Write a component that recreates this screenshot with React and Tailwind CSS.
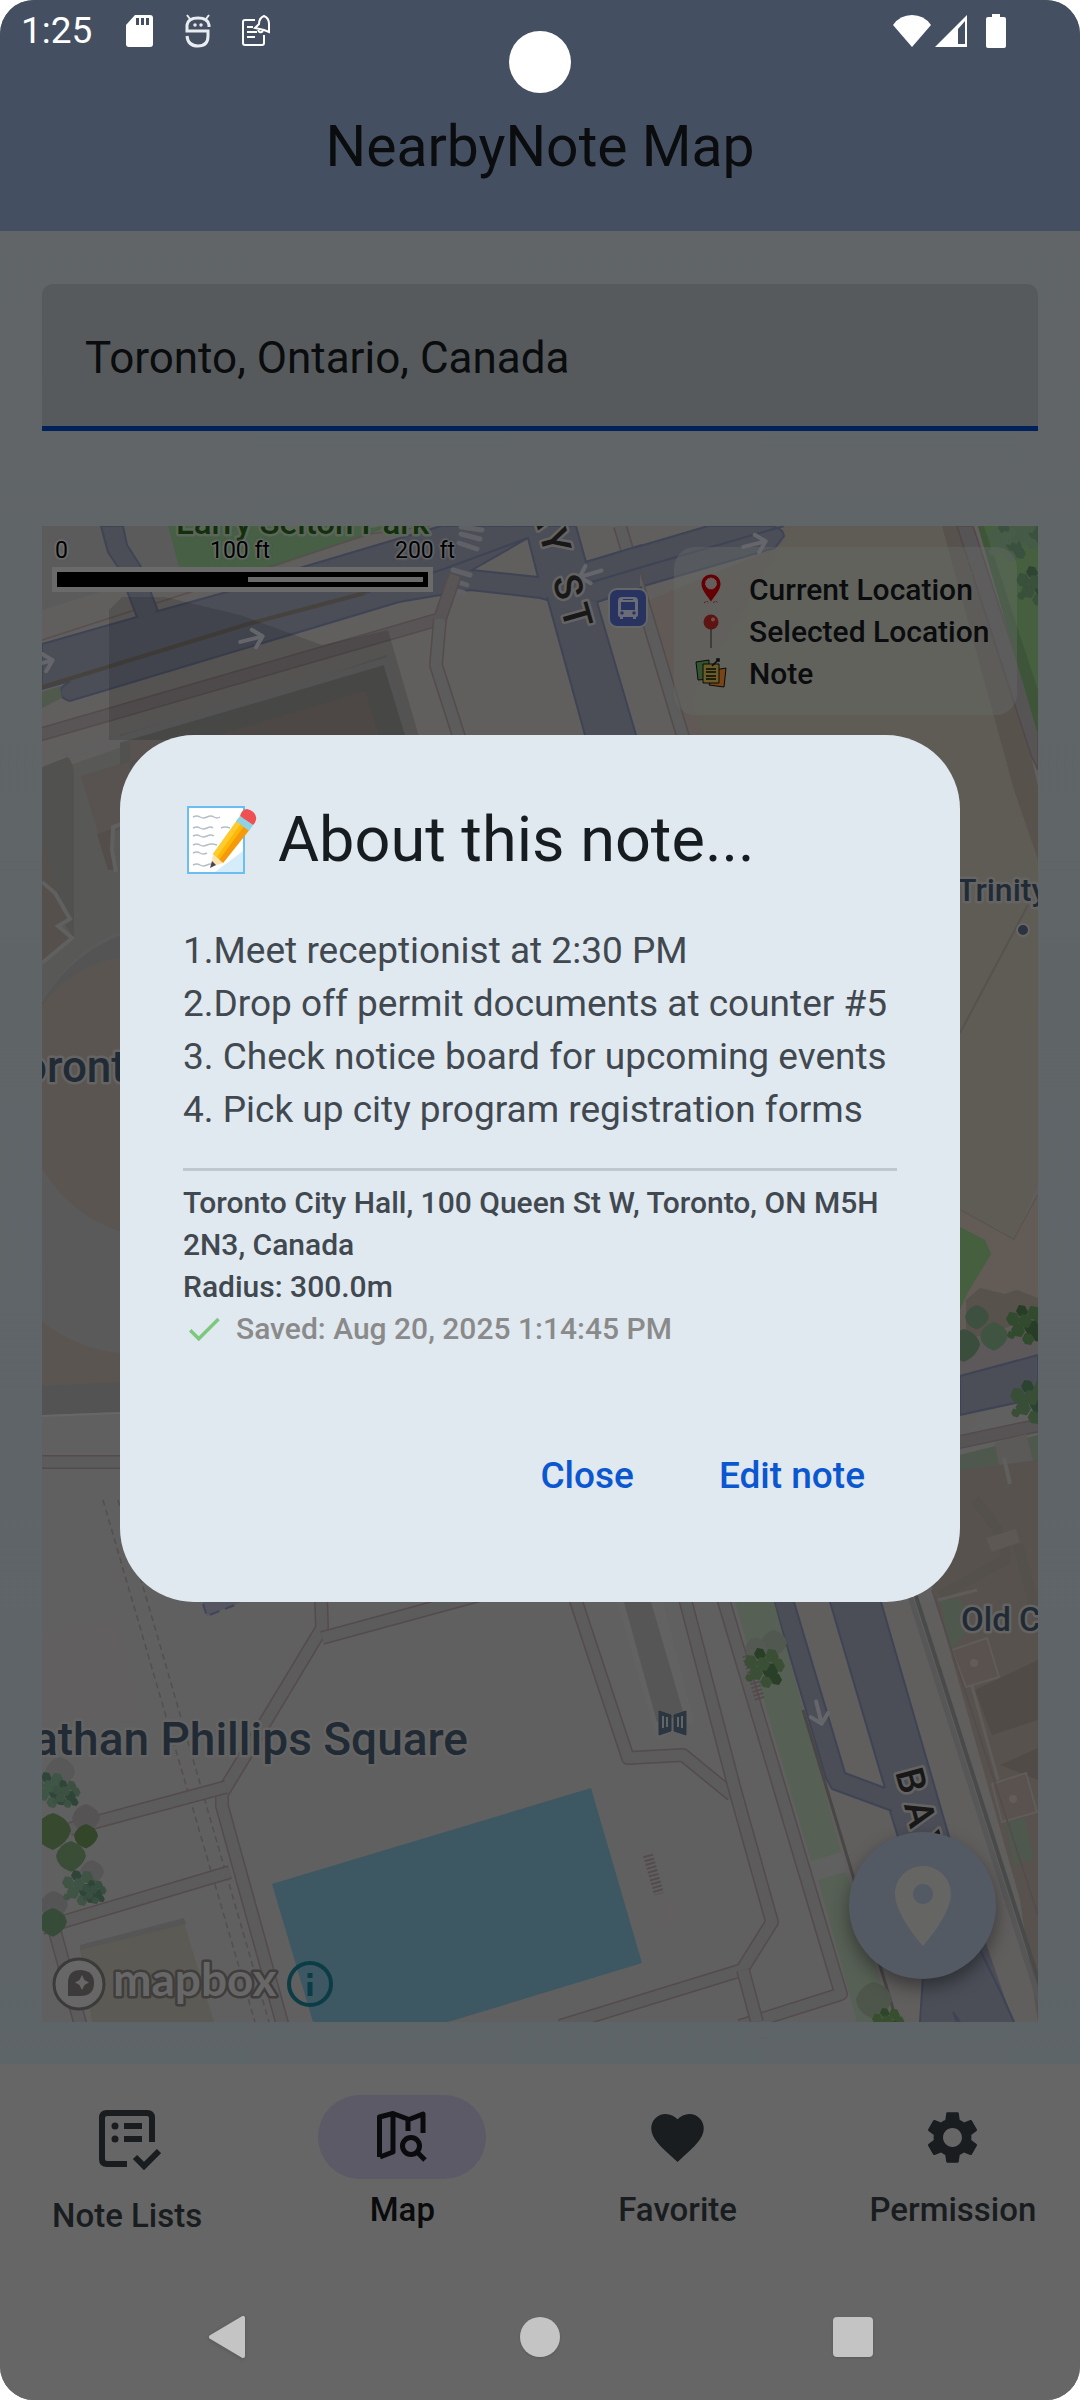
import React from "react";

const ROAD = "#4b4e57";
const ROAD_EDGE = "#3f4455";
const WALK_EDGE = "#544b4c";

function Walk({ d, fill = "#5d5c5c" }) {
  return (
    <g fill="none" strokeLinejoin="round">
      <path d={d} stroke={WALK_EDGE} strokeWidth="14" />
      <path d={d} stroke={fill} strokeWidth="11" />
    </g>
  );
}

function Bush({ x, y, s = 1, tone = "#30472f", tone2 = "#3d5a3c" }) {
  const leaves = [
    [-13, -6, 7], [-4, -14, 6], [8, -12, 7], [14, -3, 7], [6, 3, 8],
    [-8, 5, 7], [-1, -4, 7], [12, 11, 6], [2, 14, 6], [-15, 10, 4],
  ];
  return (
    <g transform={`translate(${x} ${y}) scale(${s})`}>
      {leaves.map(([cx, cy, r], i) => (
        <polygon
          key={i}
          fill={i % 3 === 1 ? tone : tone2}
          points={`${cx - r},${cy} ${cx - r / 2},${cy - r} ${cx + r / 2},${cy - r + 1} ${cx + r},${cy + 1} ${cx + r / 2},${cy + r} ${cx - r / 2},${cy + r - 1}`}
        />
      ))}
    </g>
  );
}

function Leaf({ x, y, r, fill }) {
  return (
    <path
      fill={fill}
      d={`M${x - r} ${y} q${r * 0.2} ${-r * 0.8} ${r} ${-r} q${r * 0.9} ${r * 0.3} ${r} ${r} q${-r * 0.2} ${r * 0.7} ${-r} ${r * 1.05} q${-r * 0.9} ${-r * 0.3} ${-r} ${-r * 1.05}z`}
    />
  );
}

function Arrow({ x, y, a }) {
  return (
    <path
      transform={`translate(${x} ${y}) rotate(${a})`}
      d="M-12 0H10M2 -9L11 0L2 9"
      fill="none"
      stroke="#65666b"
      strokeWidth="4"
      strokeLinecap="round"
      strokeLinejoin="round"
    />
  );
}

function MapLabel({ children, halo = "#656463", fill = "#212b36", ...rest }) {
  return (
    <text fill={fill} stroke={halo} strokeWidth="5" strokeLinejoin="round" paintOrder="stroke" fontWeight="500" {...rest}>
      {children}
    </text>
  );
}

function CityMap() {
  return (
    <svg viewBox="42 526 996 1496" preserveAspectRatio="xMidYMid slice" className="absolute inset-0 h-full w-full font-['Roboto',sans-serif]" aria-label="Map of Toronto City Hall">
      <rect x="42" y="526" width="996" height="1496" fill="#606060" />
      <path d="M42 526H1038V1300L880 1602H1038V2022H890L770 1602L640 900L600 780H42z" fill="#615e5e" />

      {/* city blocks and the park north of Queen Street */}
      <path d="M42 526H168L180 567L42 610z" fill="#5c5b5b" />
      <path d="M168 526H390L370 534L265 570H180z" fill="#465f45" />
      <path d="M42 640L370 534L430 526" fill="none" stroke="#5a4f4f" strokeWidth="1.5" />

      {/* large hall east of Bay Street */}
      <path d="M790 526H942L1014 735L1038 812V1185L1014 1240L960 1210H740L690 700z" fill="#5f5c56" />
      <path d="M942 526H957L1031 755L1038 787V860L1014 790z" fill="#58524d" />
      <path d="M692 700L703 735H690L650 600L775 548L784 526H792z" fill="#605955" />
      <path d="M957 526H973L1038 725V770L1031 755z" fill="#575456" stroke="#514849" strokeWidth="1.5" />
      <path d="M953 566L970 560M956 577L974 572" stroke="#5b5353" strokeWidth="1.5" />
      <path d="M978 526H1038V735z" fill="#46603f" />
      <path d="M978 526H984L1038 690V735z" fill="#3e5539" />
      <Bush x={1008} y={542} tone="#3b513f" tone2="#475c49" />
      <Bush x={1030} y={530} tone="#3b513f" tone2="#465b47" />
      <Bush x={1036} y={586} tone="#2e4534" tone2="#39513b" />
      <path d="M1028 905L960 1033M960 1210L1014 1240L1038 1195" fill="none" stroke="#56534e" strokeWidth="2" />
      <path d="M960 1210L1014 1240L1038 1195V1350L960 1380z" fill="#635b56" />
      <path d="M960 1345L1038 1320V1358L960 1377z" fill="#5d595a" />
      <path d="M966 1300l14 -12l25 6l12 -4l21 8v20l-72 22z" fill="#57524c" />
      <path d="M960 1227L985 1240L991 1254L968 1292L960 1310z" fill="#465f3f" />
      <Leaf x={977} y={1317} r={12} fill="#3e5140" />
      <Leaf x={964} y={1345} r={16} fill="#3b4e3e" />
      <Leaf x={994} y={1336} r={14} fill="#405442" />
      <Bush x={1026} y={1325} tone="#273d25" tone2="#324a2e" />
      <path d="M960 1376L1038 1355V1398L960 1415z" fill={ROAD} stroke={ROAD_EDGE} strokeWidth="2" />
      <Walk d="M955 1443L1045 1424" fill="#575455" />
      <path d="M960 1455L1038 1435V1462L960 1472z" fill="#4f584c" />
      <path d="M995 1443L1026 1434L1034 1464L1000 1472z" fill="#5c5a59" />
      <Bush x={1032} y={1402} s={1.1} tone="#2a4431" tone2="#384e36" />

      {/* Old City Hall */}
      <path d="M930 1580L960 1470L1038 1460V2022L1020 1900z" fill="#57524e" />
      <path d="M1004 1458L1010 1484" stroke="#5f5f5e" strokeWidth="4" />
      <path d="M975 1500Q1010 1540 1005 1560L940 1596M1018 1545L1038 1620" fill="none" stroke="#524d49" strokeWidth="10" opacity="0.5" />
      <path d="M975 1690L1038 1660V1720L992 1735zM1000 1765L1038 1748V1780z" fill="#504b47" />
      <path d="M986 1538L1016 1529L1020 1542L992 1552z" fill="#5d5854" />
      <path d="M940 1600L962 1599L968 1630L951 1650z" fill="#4f584c" />
      <g fill="#59524e" stroke="#5f5c5a" strokeWidth="2">
        <path d="M952 1650L987 1638L999 1677L966 1687z" />
        <path d="M992 1784L1026 1773L1037 1812L1002 1822z" />
      </g>
      <circle cx="974" cy="1663" r="4" fill="#635d59" />
      <circle cx="1013" cy="1799" r="4" fill="#635d59" />
      <path d="M972 1686L998 1780M938 1600L977 1590" stroke="#5f5c5a" strokeWidth="3" fill="none" />
      <path d="M1005 1823L1024 1818L1034 1858L1014 1866z" fill="#4f584c" />

      {/* Queen Street */}
      <g fill={ROAD} stroke={ROAD_EDGE} strokeWidth="2">
        <path d="M101 526H123L127 545L141 567L158 611L138 620L118 567L108 552z" />
        <path d="M42 644L158 611L234 590L303 567L441 526H576L586 562L708 526H760Q782 524 784 536L775 548L640 587L597 602L547 600L540 598L470 590L399 602L70 701Q58 698 61 688L70 681L42 689z" />
      </g>
      <path d="M104 527H122L126 545L140 567L156 613L139 618L119 567L109 552z" fill={ROAD} />
      <path d="M42 687L248 624L365 593" fill="none" stroke="#46433f" strokeWidth="4" />
      <path d="M365 593L441 570L528 538M590 582L784 526" fill="none" stroke={ROAD_EDGE} strokeWidth="2" />
      <path d="M528 538L538 577L472 570z" fill="#615e5e" stroke={ROAD_EDGE} strokeWidth="2" />
      <path d="M42 692L60 686L62 698L42 708z" fill="#4f5a4c" />
      <g stroke="#606166" strokeWidth="5" strokeLinecap="round">
        <path d="M461 527L482 530M461 534L480 539M459 543L477 549M453 570L470 575M449 579L467 585M446 588L464 593" />
      </g>

      {/* footpaths below Queen Street */}
      <Walk d="M35 736L440 619L455 575" fill="#595556" />
      <Walk d="M440 619L436 665L460 740" />
      <path d="M620 526L690 760" fill="none" stroke={WALK_EDGE} strokeWidth="14" />
      <path d="M620 526L690 760" fill="none" stroke="#5b5c5b" strokeWidth="11" />
      <path d="M586 562L640 547V586L597 602z" fill={ROAD} />
      <path d="M586 562L642 545M597 602L642 587M592 582L642 567" stroke={ROAD_EDGE} strokeWidth="2" />

      {/* buildings in the north-west block */}
      <path d="M42 775L386 655L412 740V1000H42z" fill="#585857" />
      <path d="M120 735L386 663L410 740V790H120z" fill="#51514f" />
      <path d="M66 755L386 661L410 740" fill="none" stroke="#5e5f5e" strokeWidth="7" />
      <path d="M42 767L68 757Q74 764 74 775V938L42 890z" fill="#515150" />
      <path d="M81 776L365 691L380 740H130V828L98 833z" fill="#585350" />
      <path d="M97 834L112 829L116 870H108z" fill="#544e4b" />
      <path d="M42 840L60 895L42 882z" fill="#54504c" />
      <path d="M42 882L55 893L70 919L58 926L72 938L42 963z" fill="#56504c" />
      <path d="M42 882L55 893L70 919L58 926L72 938L42 963" fill="none" stroke="#606060" strokeWidth="4" />
      <path d="M124 823L113 827L112 850L116 872" fill="none" stroke="#606060" strokeWidth="4" />
      <path d="M109 610L122 597L165 597L240 615L322 645L388 630L420 740H109z" fill="#000" opacity="0.12" />
      <path d="M42 1002Q75 945 125 930V1410L42 1415z" fill="#5a5a5a" />
      <path d="M42 1002Q75 950 125 934V960Q75 965 42 1010z" fill="#545454" />
      <path d="M42 1005Q75 963 120 958V1231Q70 1215 42 1168z" fill="#5b5551" />
      <path d="M42 1322Q80 1350 120 1353V1382L42 1386z" fill="#5b5551" />
      <path d="M42 1386L120 1382V1412L42 1415z" fill="#535353" />
      <path d="M42 1416L120 1413" stroke="#676767" strokeWidth="2" />
      <Walk d="M35 1462H125" />

      {/* Bay Street */}
      <path d="M545 590L597 602L636 735L881 1602L949 1835L1013 2022H920L924 1975L898 1837L885 1788L830 1602L585 735z" fill={ROAD} />
      <path d="M547 597L585 735L830 1602L885 1788M890 1811L898 1837L924 1960L920 2022M597 602L636 735L881 1602L950 1840L981 1952L1002 1995L1014 2022" fill="none" stroke={ROAD_EDGE} strokeWidth="2" />
      <path d="M774 1602H794L845 1773L885 1788L892 1811L832 1789L826 1778z" fill={ROAD} />
      <path d="M774 1602L826 1778L832 1789L892 1811M794 1602L845 1773L885 1788" fill="none" stroke={ROAD_EDGE} strokeWidth="2" />
      <path d="M957 2022L953 2012L960 2022" fill="none" stroke={ROAD_EDGE} strokeWidth="2" />

      {/* planted strip */}
      <path d="M735 1602H774L841 1852L811 1861z" fill="#576055" />
      <path d="M818 1880L846 1872L893 2022H857z" fill="#576055" />
      <path d="M803 1710L897 2022" stroke="#494746" strokeWidth="3" />
      <path d="M914 1590L1040 1985" stroke="#494a4a" strokeWidth="4" />
      <path d="M908 1590L1040 2003" stroke="#575757" strokeWidth="5" />
      <path d="M932 1590L1038 1915" stroke={WALK_EDGE} strokeWidth="1.5" />
      <Arrow x={819} y={1713} a={76} />

      {/* Nathan Phillips Square */}
      <path d="M42 1634L118 1616L142 1722L42 1724z" fill="#625f60" />
      <path d="M203 1602H241L207 1616z" fill="#565661" />
      <path d="M203 1604L207 1616L240 1603" fill="none" stroke="#41445a" strokeWidth="2" strokeDasharray="10 6" />
      <g stroke="#544e4e" strokeWidth="1.5" strokeDasharray="6 4" fill="none">
        <path d="M103 1500L255 2022M118 1500L269 2022" />
      </g>
      <Walk d="M321 1595L322 1628L222 1794L222 1806L284 2030" />
      <Walk d="M322 1638L480 1595" />
      <Walk d="M226 1787L70 1829" />
      <Walk d="M230 1872L42 1928" />
      <Walk d="M55 1932L82 2030" />
      <Walk d="M574 1595L628 1758L683 1755L732 1795" />
      <Walk d="M684 1595L735 1790L772 1922L742 1970L560 2026" />
      <Walk d="M722 1595L841 1994L740 2026" />
      <Walk d="M743 1970L757 2022" />
      <path d="M617 1602H663L694 1722L657 1740z" fill="#626262" />
      <path d="M624 1602H651L684 1715L657 1722z" fill="#565656" />
      <path d="M747 1655L760 1700" stroke={WALK_EDGE} strokeWidth="10" strokeDasharray="2 2" />
      <path d="M648 1855L659 1894" stroke={WALK_EDGE} strokeWidth="10" strokeDasharray="2 2" />
      <path d="M658 1902L680 1900L685 1922L662 1928z" fill="#625f60" />
      <path d="M272 1884L591 1788L642 1963L448 2022H313z" fill="#3d5763" />
      <path d="M80 1950L184 1922L214 2022H92z" fill="#5c5a54" />
      <path d="M80 1950V1945L184 1918L186 1924z" fill="#565656" />

      {/* trees */}
      <g>
        <Leaf x={86} y={1818} r={14} fill="#565354" />
        <Leaf x={60} y={1772} r={15} fill="#595859" />
        <Leaf x={92} y={1872} r={12} fill="#565657" />
        <Leaf x={54} y={1905} r={14} fill="#555555" />
      </g>
      <Bush x={50} y={1790} s={0.9} tone="#30463a" tone2="#3f5545" />
      <Bush x={66} y={1794} s={0.7} tone="#2f4538" tone2="#3d5143" />
      <Leaf x={53} y={1831} r={18} fill="#37492f" />
      <Leaf x={86} y={1836} r={12} fill="#33462a" />
      <Leaf x={71} y={1856} r={15} fill="#394d37" />
      <Bush x={80} y={1888} s={0.9} tone="#2f4538" tone2="#405445" />
      <Bush x={94} y={1892} s={0.6} tone="#2f4538" tone2="#384e40" />
      <Leaf x={53} y={1922} r={14} fill="#364c39" />
      <Leaf x={774} y={1643} r={13} fill="#50584f" />
      <Leaf x={756} y={1648} r={11} fill="#545a53" />
      <Bush x={764} y={1668} tone="#2a3f27" tone2="#3a4f35" />
      <Leaf x={874} y={2000} r={18} fill="#4e564c" />
      <Bush x={888} y={2024} s={0.8} tone="#2f452a" tone2="#374f2f" />

      <Arrow x={252} y={639} a={-14} />
      <Arrow x={42} y={663} a={-14} />
      <Arrow x={755} y={544} a={-14} />
      <Arrow x={590} y={574} a={163} />

      {/* points of interest */}
      <g transform="translate(610 590)">
        <rect x="-2" y="-2" width="40" height="40" rx="9" fill="#656668" />
        <rect width="36" height="36" rx="7" fill="#29335f" />
        <path d="M12 7h12q4 0 4 4v14q0 2-2 2v2h-3v-2H13v2h-3v-2q-2 0-2-2V11q0-4 4-4z" fill="#6a6c78" />
        <path d="M11 12h14v8H11zM13 9h10v1H13z" fill="#29335f" />
        <circle cx="12" cy="23" r="1.7" fill="#29335f" />
        <circle cx="24" cy="23" r="1.7" fill="#29335f" />
      </g>
      <g transform="translate(659 1711)">
        <path d="M0 0L12 4V20L0 24zM27 0L15 4V20L27 24z" fill="#2b3641" stroke="#2b3641" strokeWidth="1" />
        <path d="M4 5v12M8 6v10M19 6v10M23 5v12" stroke="#646566" strokeWidth="2" />
      </g>
      <circle cx="1023" cy="930" r="6" fill="#29343f" stroke="#686663" strokeWidth="2" />

      {/* labels */}
      <MapLabel x="176" y="534" fontSize="33" fill="#12300b" halo="#5c655a">Larry Selton Park</MapLabel>
      <MapLabel x="126" y="1082" fontSize="44" textAnchor="end">Toront</MapLabel>
      <MapLabel x="957" y="901" fontSize="32">Trinity</MapLabel>
      <MapLabel x="961" y="1631" fontSize="33">Old C</MapLabel>
      <MapLabel x="468" y="1755" fontSize="46" textAnchor="end">Nathan Phillips Square</MapLabel>
      <MapLabel x="0 34 66" y="0" fontSize="39" fill="#181818" transform="translate(895 1772) rotate(75)">BAY</MapLabel>
      <MapLabel x="0 28 76 106" y="0" fontSize="39" fill="#181818" transform="translate(531 506) rotate(74)">AYST</MapLabel>

      {/* map provider mark */}
      <g>
        <circle cx="79" cy="1984" r="25" fill="#676767" stroke="#3c3b3a" strokeWidth="3" />
        <path d="M68 1996V1983Q68 1970 81 1970Q94 1971 94 1983Q94 1996 80 1996z" fill="#3c3b3a" />
        <path d="M82 1975L84.500 1980L89 1982.500L84.500 1985L82 1990L79.500 1985L75 1982.500L79.500 1980z" fill="#676767" />
        <text x="113" y="1996" fontSize="46" fontWeight="700" fill="#676767" stroke="#3f3e3c" strokeWidth="5" strokeLinejoin="round" paintOrder="stroke" className="font-['Lato',sans-serif]">mapbox</text>
        <circle cx="310" cy="1984" r="21" fill="none" stroke="#0c3c46" strokeWidth="4" />
        <path d="M307.500 1973h5v5h-5zM307.500 1982h5v14h-5z" fill="#0c3c46" />
      </g>
    </svg>
  );
}

function PinIcon() {
  return (
    <svg viewBox="0 0 32 32" className="h-8 w-8" aria-hidden="true">
      <path d="M16 1.500c5.400 0 9.500 4 9.500 9.500 0 6-6 12-9.500 17.500C12.500 23 6.500 17 6.500 11c0-5.500 4.100-9.500 9.500-9.500z" fill="#640003" />
      <circle cx="16" cy="10.500" r="5.500" fill="#62605e" stroke="#7b5f5f" strokeWidth="1" strokeDasharray="2 1" />
      <path d="M9 30q3-3 5 0M18 30q3-3 5 0" stroke="#5c1c1d" strokeWidth="1" fill="none" strokeDasharray="2 1" />
    </svg>
  );
}

function PushpinIcon() {
  return (
    <svg viewBox="0 0 32 36" className="h-9 w-8" aria-hidden="true">
      <path d="M16 14V35" stroke="#3f3d3b" strokeWidth="2" />
      <circle cx="16" cy="9" r="7.500" fill="#5d1514" />
      <circle cx="18" cy="6.500" r="2" fill="#7c4a49" />
    </svg>
  );
}

function NotesIcon() {
  return (
    <svg viewBox="0 0 32 32" className="h-8 w-8" aria-hidden="true" stroke="#0a0a0a" strokeWidth="1">
      <path d="M1 5L14 3V22L3 23z" fill="#32552f" />
      <path d="M20 13L31 11L29 30L14 28z" fill="#7a4516" />
      <path d="M8 7H24V26H8z" fill="#6b5d27" />
      <path d="M11 12h10M11 15h10M11 19h10M11 22h10M17 9l5-5M22 2h2v2h-2z" fill="none" strokeWidth="1.500" />
    </svg>
  );
}

const legend = [
  { label: "Current Location", Icon: PinIcon },
  { label: "Selected Location", Icon: PushpinIcon },
  { label: "Note", Icon: NotesIcon },
];

function StatusBar() {
  return (
    <div className="flex h-[62px] items-center justify-between pl-[21px] pr-[73px] text-white">
      <div className="flex items-center">
        <span className="w-[104px] text-[37px] leading-[62px]">1:25</span>
        <svg viewBox="0 0 30 34" className="h-[34px] w-[30px]" aria-hidden="true">
          <path d="M10 1h15q3 0 3 3v26q0 3-3 3H4q-3 0-3-3V11z" fill="#fff" />
          <path d="M11 4h3v7h-3zM16 4h3v7h-3zM21 4h3v7h-3z" fill="#445062" />
        </svg>
        <svg viewBox="0 0 28 34" className="ml-[29px] h-[34px] w-7" fill="none" stroke="#e9ecf0" strokeWidth="3" aria-hidden="true">
          <path d="M25 13V11Q24 4 14 4T3 11V17H24V22Q24 32 14 32T3 22" />
          <path d="M6 5L3 1M22 5L25 1" strokeWidth="2" />
          <circle cx="11" cy="11" r="1" strokeWidth="1.500" />
          <circle cx="17" cy="11" r="1" strokeWidth="1.500" />
        </svg>
        <svg viewBox="0 0 30 34" className="ml-[29px] h-[34px] w-[30px]" fill="none" stroke="#fff" strokeWidth="2" aria-hidden="true">
          <path d="M14 6H4Q2 6 2 8V29Q2 31 4 31H21Q23 31 23 29V21" />
          <path d="M6 13H12M6 18H16M6 23H14" />
          <path d="M14 14L18 10Q18 4 23 2Q28 4 28 10V18L23 16zM17 16Q19 20 22 17" />
        </svg>
      </div>
      <div className="flex items-center">
        <svg viewBox="0 0 40 34" className="h-[34px] w-10" fill="#fff" aria-hidden="true">
          <path d="M1 11Q8 1 20 1T39 11L20 33z" />
        </svg>
        <svg viewBox="0 0 34 34" className="ml-0.5 h-[34px] w-[34px]" aria-hidden="true">
          <path d="M33 1V33H1z" fill="#fff" />
          <path d="M31 7V30H24V15z" fill="#445062" />
        </svg>
        <svg viewBox="0 0 22 34" className="ml-[17px] h-[34px] w-[22px]" fill="#fff" aria-hidden="true">
          <path d="M7 0h8v3h4q2 0 2 2v27q0 2-2 2H3q-2 0-2-2V5q0-2 2-2h4z" />
        </svg>
      </div>
      <div className="absolute left-1/2 top-[31px] h-[62px] w-[62px] -translate-x-1/2 rounded-full bg-white" />
    </div>
  );
}

function MemoEmoji() {
  return (
    <svg viewBox="0 0 74 74" className="h-[74px] w-[74px] shrink-0" role="img" aria-label="Memo">
      <rect x="5" y="4" width="56" height="66" fill="#fff" stroke="#6cbdf2" strokeWidth="2" />
      <path d="M60 48V69H32z" fill="#d5edfa" />
      <g stroke="#b3bfc6" strokeWidth="1.500" fill="none">
        <path d="M10 14q4-2 7 0t7 0t7 0t6 0M10 25q4-2 7 0t7 0t6 0M38 25q4-2 9 0M10 33q4-2 7 0t7 0t7 0M10 42q4-2 7 0t7 0t10 0M10 50q4-2 7 0t7 0M10 62q4-2 7 0t7 0t7 0" />
      </g>
      <path d="M30 51L55 16L67 26L40 60z" fill="#ffb805" />
      <path d="M30 51L55 16L59 19L33 55z" fill="#ffcb2e" />
      <path d="M36 57L62 22L67 26L40 60z" fill="#f59a0c" />
      <path d="M30 51L40 60L28 64z" fill="#fde3b0" />
      <path d="M29 58L33 62L27 65z" fill="#49474d" />
      <path d="M53 18L57 13L70 22L66 28z" fill="#8fd2e2" />
      <path d="M57 13Q59 6 64 6Q72 8 73 14Q74 18 70 22z" fill="#ef5152" />
    </svg>
  );
}

function NoteDialog() {
  return (
    <div role="dialog" aria-modal="true" aria-labelledby="note-title" className="w-full rounded-[74px] bg-[#e0e8f0] p-[63px] text-[#41484f]">
      <h2 id="note-title" className="flex items-center gap-[21px] text-[63px] leading-[84px] text-[#161c20]">
        <MemoEmoji />
        About this note...
      </h2>
      <div className="mt-[42px] text-[37px] leading-[53px]">
        <p>1.Meet receptionist at 2:30 PM</p>
        <p>2.Drop off permit documents at counter #5</p>
        <p>3. Check notice board for upcoming events</p>
        <p>4. Pick up city program registration forms</p>
      </div>
      <hr className="mt-8 border-t-[3px] border-[#bfc7cf]" />
      <div className="mt-[11px] text-[30px] font-medium leading-[42px]">
        <p>Toronto City Hall, 100 Queen St W, Toronto, ON M5H<br />2N3, Canada</p>
        <p>Radius: 300.0m</p>
        <p className="flex items-center gap-[11px] text-[#8a8a8a]">
          <svg viewBox="0 0 24 24" className="h-[42px] w-[42px]" fill="#7dc87d" aria-hidden="true">
            <path d="M9 16.170L4.830 12l-1.420 1.410L9 19 21 7l-1.410-1.410z" />
          </svg>
          Saved: Aug 20, 2025 1:14:45 PM
        </p>
      </div>
      <div className="mt-[63px] flex justify-end gap-[21px] text-[37px] font-medium text-[#0b57d0]">
        <button type="button" className="h-[126px] px-8">Close</button>
        <button type="button" className="h-[126px] px-8">Edit note</button>
      </div>
    </div>
  );
}

function NavItem({ label, active, tall, children }) {
  return (
    <a href="#" aria-current={active ? "page" : undefined} className={`flex flex-1 flex-col items-center ${active ? "text-[#090b0d]" : "text-[#191d20]"}`}>
      <span className={`flex w-[168px] items-center justify-center rounded-full ${tall ? "h-[90px]" : "h-[84px]"} ${active ? "bg-[#5b5a66]" : ""}`}>
        {children}
      </span>
      <span className="mt-2.5 whitespace-nowrap text-[33px] font-medium leading-[42px]">{label}</span>
    </a>
  );
}

export default function App() {
  return (
    <div className="relative flex min-h-screen flex-col overflow-hidden rounded-[34px] bg-linear-to-b from-[#616567] to-[#5d6468] font-['Roboto',sans-serif]">
      <header className="flex h-[231px] flex-col bg-[#445062]">
        <StatusBar />
        <h1 className="flex flex-1 items-center justify-center text-[57px] text-[#0a0c0e]">NearbyNote Map</h1>
      </header>

      <main className="flex flex-1 flex-col px-[42px] pb-[42px] pt-[53px]">
        <input
          type="text"
          aria-label="Search location"
          defaultValue="Toronto, Ontario, Canada"
          className="h-[147px] w-full rounded-t-[11px] border-b-[5px] border-[#00215a] bg-[#565a5d] px-[43px] pt-1.5 text-[44px] text-[#0a0c0d] outline-none"
        />
        <div className="relative mt-[95px] flex-1 overflow-hidden">
          <CityMap />

          <div className="absolute left-2.5 top-[11px] w-[400px] text-[23px] leading-[28px] text-black">
            <div className="grid grid-cols-[155px_185px_60px] whitespace-nowrap pl-[3px] [text-shadow:0_0_3px_#777,0_0_3px_#777,0_0_3px_#777]">
              <span>0</span>
              <span>100 ft</span>
              <span>200 ft</span>
            </div>
            <div className="mt-0.5 w-[381px] border-[5px] border-[#6a6a6a] bg-black">
              <div className="my-[5px] ml-auto mr-[5px] h-[5px] w-[175px] bg-[#6a6a6a]" />
            </div>
          </div>

          <ul className="absolute right-[21px] top-[21px] h-[168px] w-[343px] rounded-[21px] bg-[#666b6a]/40 px-[21px] pt-[21px]">
            {legend.map(({ label, Icon }) => (
              <li key={label} className="flex h-[42px] items-center gap-[22px] whitespace-nowrap text-[30px] font-medium text-[#0a0c0d]">
                <Icon />
                {label}
              </li>
            ))}
          </ul>

          <button type="button" aria-label="My location" className="absolute bottom-[43px] right-[42px] flex h-[147px] w-[147px] items-center justify-center rounded-full bg-[#535a64] shadow-[0_8px_18px_rgba(0,0,0,0.4)]">
            <svg viewBox="0 0 24 24" className="h-24 w-24" fill="#656664" aria-hidden="true">
              <path d="M12 2C8.130 2 5 5.130 5 9c0 5.250 7 13 7 13s7-7.750 7-13c0-3.870-3.130-7-7-7zm0 9.500c-1.380 0-2.500-1.120-2.500-2.500s1.120-2.500 2.500-2.500 2.500 1.120 2.500 2.500-1.120 2.500-2.500 2.500z" />
            </svg>
          </button>
        </div>
      </main>

      <footer className="flex h-[336px] flex-col bg-[#666666]">
        <nav className="flex flex-1 gap-[21px] pt-[31px]">
          <NavItem label="Note Lists" tall>
            <svg viewBox="-6 0 68 60" className="h-[60px] w-[68px]" aria-hidden="true">
              <path d="M28 54H8Q3 54 3 49V8Q3 3 8 3H48Q53 3 53 8V32" fill="none" stroke="currentColor" strokeWidth="6" />
              <path d="M25 13H43V19H25zM25 26H43V32H25z" fill="currentColor" />
              <circle cx="16" cy="16" r="3.500" fill="currentColor" />
              <circle cx="16" cy="29" r="3.500" fill="currentColor" />
              <path d="M36 47L45 56L60 41" fill="none" stroke="currentColor" strokeWidth="6" />
            </svg>
          </NavItem>
          <NavItem label="Map" active>
            <svg viewBox="0 0 50 52" className="h-[52px] w-[50px]" fill="none" stroke="currentColor" strokeWidth="5" aria-hidden="true">
              <path d="M2.500 46V6L16 2.500L32 8.500L46 3V22M3 46L16 41V3M31 8V20" strokeLinejoin="round" />
              <circle cx="34" cy="35" r="8.500" />
              <path d="M40 41L48 49" />
            </svg>
          </NavItem>
          <NavItem label="Favorite">
            <svg viewBox="0 0 24 24" className="h-[63px] w-[63px]" fill="currentColor" aria-hidden="true">
              <path d="M12 21.350l-1.450-1.320C5.400 15.360 2 12.280 2 8.500 2 5.420 4.420 3 7.500 3c1.740 0 3.410.810 4.500 2.090C13.090 3.810 14.760 3 16.500 3 19.580 3 22 5.420 22 8.500c0 3.780-3.400 6.860-8.550 11.540L12 21.350z" />
            </svg>
          </NavItem>
          <NavItem label="Permission">
            <svg viewBox="0 0 24 24" className="h-[63px] w-[63px]" fill="currentColor" aria-hidden="true">
              <path d="M19.140 12.940c.040-.300.060-.610.060-.940 0-.320-.020-.640-.070-.940l2.030-1.580c.180-.140.230-.410.120-.610l-1.920-3.320c-.120-.220-.370-.290-.590-.220l-2.390.960c-.500-.380-1.030-.700-1.620-.940l-.360-2.540c-.040-.240-.240-.410-.480-.410h-3.840c-.240 0-.430.170-.470.410l-.360 2.540c-.590.240-1.130.570-1.620.940l-2.390-.960c-.220-.080-.470 0-.590.220L2.740 8.870c-.120.210-.080.470.120.610l2.030 1.580c-.050.300-.090.630-.090.940s.020.640.070.940l-2.030 1.580c-.180.140-.230.410-.120.610l1.920 3.320c.120.220.370.290.590.220l2.390-.960c.500.380 1.030.700 1.620.940l.360 2.540c.050.240.240.410.480.410h3.840c.240 0 .440-.170.470-.410l.360-2.540c.590-.240 1.130-.560 1.620-.940l2.390.960c.220.080.470 0 .590-.220l1.920-3.320c.120-.220.070-.470-.120-.610l-2.010-1.580zM12 15.600c-1.980 0-3.600-1.620-3.600-3.600s1.620-3.600 3.600-3.600 3.600 1.620 3.600 3.600-1.620 3.600-3.600 3.600z" />
            </svg>
          </NavItem>
        </nav>
        <div className="flex h-[126px] px-[70px]">
          <button type="button" aria-label="Back" className="flex flex-1 items-center justify-center">
            <svg viewBox="0 0 38 44" className="h-11 w-[38px] drop-shadow-sm" fill="#c4c4c4" stroke="#c4c4c4" strokeWidth="4" strokeLinejoin="round" aria-hidden="true">
              <path d="M3 22L35 3V41z" />
            </svg>
          </button>
          <button type="button" aria-label="Home" className="flex flex-1 items-center justify-center">
            <span className="h-10 w-10 rounded-full bg-[#c4c4c4] shadow" />
          </button>
          <button type="button" aria-label="Recent apps" className="flex flex-1 items-center justify-center">
            <span className="h-10 w-10 rounded bg-[#c4c4c4] shadow" />
          </button>
        </div>
      </footer>

      <div className="absolute inset-x-0 bottom-[63px] top-0 flex items-center px-[120px]">
        <NoteDialog />
      </div>
    </div>
  );
}
